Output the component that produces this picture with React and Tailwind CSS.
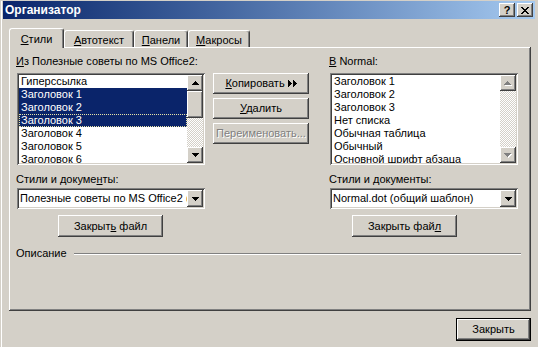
import React from "react";

// classic 3D edges
const RAISED =
  "shadow-[inset_-1px_-1px_0_#404040,inset_1px_1px_0_#ffffff,inset_-2px_-2px_0_#808080,inset_2px_2px_0_#d4d0c8]";
const SUNKEN =
  "shadow-[inset_1px_1px_0_#808080,inset_-1px_-1px_0_#ffffff,inset_2px_2px_0_#404040,inset_-2px_-2px_0_#d4d0c8]";

const ARROWS = {
  down: { w: 7, h: 4, d: "M0 0h7v1h-1v1h-1v1h-1v1h-1v-1h-1v-1h-1v-1h-1z" },
  up: { w: 7, h: 4, d: "M3 0h1v1h1v1h1v1h1v1h-7v-1h1v-1h1v-1h1z" },
  right: { w: 4, h: 7, d: "M0 0h1v1h1v1h1v1h1v1h-1v1h-1v1h-1v1h-1z" },
};

function Arrow({ dir, disabled }) {
  const a = ARROWS[dir];
  if (disabled) {
    return (
      <svg width={a.w + 1} height={a.h + 1} shapeRendering="crispEdges">
        <path d={a.d} fill="#ffffff" transform="translate(1 1)" />
        <path d={a.d} fill="#808080" />
      </svg>
    );
  }
  return (
    <svg width={a.w} height={a.h} shapeRendering="crispEdges">
      <path d={a.d} fill="#000000" />
    </svg>
  );
}

const CLOSE_GLYPH = [
  "XX....XX",
  ".XX..XX.",
  "..XXXX..",
  "...XX...",
  "..XXXX..",
  ".XX..XX.",
  "XX....XX",
];

function CloseGlyph() {
  return (
    <svg width="8" height="7" shapeRendering="crispEdges">
      {CLOSE_GLYPH.flatMap((row, y) =>
        row.split("").map((c, x) =>
          c === "X" ? <rect key={`${x}-${y}`} x={x} y={y} width="1" height="1" fill="#000" /> : null
        )
      )}
    </svg>
  );
}

function ScrollButton({ dir, disabled }) {
  return (
    <div className={`w-[16px] h-[16px] shrink-0 bg-[#d4d0c8] flex items-center justify-center ${RAISED}`}>
      <Arrow dir={dir} disabled={disabled} />
    </div>
  );
}

function Scrollbar({ thumb, disabled }) {
  return (
    <div className="w-[16px] flex flex-col">
      <ScrollButton dir="up" disabled={disabled} />
      {thumb && <div className={`h-[27px] shrink-0 bg-[#d4d0c8] ${RAISED}`} />}
      <div className="flex-1 bg-[repeating-conic-gradient(#ffffff_0_25%,#d4d0c8_0_50%)] bg-[length:2px_2px]" />
      <ScrollButton dir="down" disabled={disabled} />
    </div>
  );
}

function ListBox({ items, selected = [], focus, thumb, disabled }) {
  return (
    <div className={`w-[188px] h-[92px] bg-white p-[2px] flex ${SUNKEN}`}>
      <div className="flex-1 overflow-hidden">
        {items.map((item, i) => (
          <div
            key={item}
            className={`h-[13px] leading-[11px] pt-px pl-[2px] whitespace-nowrap ${
              selected.includes(i) ? "bg-[#0a246a] text-white" : ""
            } ${focus === i ? "outline-1 outline-dotted outline-[#e8e4a8] -outline-offset-1" : ""}`}
          >
            {item}
          </div>
        ))}
      </div>
      <Scrollbar thumb={thumb} disabled={disabled} />
    </div>
  );
}

function Combo({ text }) {
  return (
    <div className={`h-[21px] bg-white p-[2px] flex ${SUNKEN}`}>
      <div className="flex-1 overflow-hidden whitespace-nowrap pl-px leading-[17px]">{text}</div>
      <div className={`w-[16px] h-[17px] bg-[#d4d0c8] flex items-center justify-center ${RAISED}`}>
        <Arrow dir="down" />
      </div>
    </div>
  );
}

function Button({ children, className = "", disabled }) {
  return (
    <div
      className={`bg-[#d4d0c8] flex items-center justify-center whitespace-nowrap ${RAISED} ${
        disabled ? "text-[#808080] [text-shadow:1px_1px_0_#ffffff]" : ""
      } ${className}`}
    >
      {children}
    </div>
  );
}

function Tab({ children, active, width }) {
  return (
    <div
      className={`${width} border-l border-t border-white border-r border-r-[#404040] rounded-t-[3px] shadow-[inset_-1px_0_0_#808080] bg-[#d4d0c8] text-center ${
        active ? "h-[20px] -mb-px pt-[4px] relative z-10" : "h-[17px] pt-[3px]"
      }`}
    >
      {children}
    </div>
  );
}

const leftItems = [
  "Гиперссылка",
  "Заголовок 1",
  "Заголовок 2",
  "Заголовок 3",
  "Заголовок 4",
  "Заголовок 5",
  "Заголовок 6",
];
const rightItems = [
  "Заголовок 1",
  "Заголовок 2",
  "Заголовок 3",
  "Нет списка",
  "Обычная таблица",
  "Обычный",
  "Основной шрифт абзаца",
];

export default function App() {
  return (
    <div className="w-[538px] h-[347px] overflow-hidden bg-[#d4d0c8] pl-px pt-px font-['Liberation_Sans',Arial,sans-serif] text-[11px] leading-[13px] text-black select-none">
      <div className="h-full border-l border-white">
        {/* title bar */}
        <div className="ml-px w-[532px] h-[18px] bg-linear-to-r from-[#0a246a] to-[#a6caf0] flex items-center pl-[2px] pr-[2px]">
          <span className="font-bold text-[12px] text-white flex-1">Организатор</span>
          <div className={`w-[16px] h-[14px] bg-[#d4d0c8] flex items-center justify-center font-bold leading-[12px] ${RAISED}`}>
            ?
          </div>
          <div className={`ml-[2px] w-[16px] h-[14px] bg-[#d4d0c8] flex items-center justify-center ${RAISED}`}>
            <CloseGlyph />
          </div>
        </div>

        {/* tabs */}
        <div className="mt-[9px] ml-[7px] h-[19px] flex items-end">
          <Tab active width="w-[55px]">
            <u>С</u>тили
          </Tab>
          <Tab width="w-[70px]">
            <u>А</u>втотекст
          </Tab>
          <Tab width="w-[54px]">
            <u>П</u>анели
          </Tab>
          <Tab width="w-[62px]">
            <u>М</u>акросы
          </Tab>
        </div>

        {/* tab page */}
        <div className={`ml-[7px] w-[522px] h-[264px] pt-[8px] pl-[8px] flex flex-col ${RAISED}`}>
          <div className="flex">
            <div className="w-[188px] flex flex-col">
              <div className="-ml-px whitespace-nowrap">
                <u>И</u>з Полезные советы по MS Office2:
              </div>
              <div className="mt-[5px]">
                <ListBox items={leftItems} selected={[1, 2, 3]} focus={3} thumb />
              </div>
              <div className="mt-[8px] -ml-px">
                Стили и докуме<u>н</u>ты:
              </div>
              <div className="mt-[2px]">
                <Combo text="Полезные советы по MS Office2 (" />
              </div>
              <Button className="mt-[6px] ml-[41px] w-[105px] h-[22px]">
                <span>
                  Закрыт<u>ь</u> файл
                </span>
              </Button>
            </div>

            <div className="ml-[8px] w-[96px] pt-[18px] flex flex-col gap-[4px]">
              <Button className="h-[21px] gap-[3px]">
                <span>
                  <u>К</u>опировать
                </span>
                <span className="flex gap-[1px]">
                  <Arrow dir="right" />
                  <Arrow dir="right" />
                </span>
              </Button>
              <Button className="h-[21px]">
                <span>
                  <u>У</u>далить
                </span>
              </Button>
              <Button className="h-[21px]" disabled>
                <span>Переименовать...</span>
              </Button>
            </div>

            <div className="ml-[21px] w-[188px] flex flex-col">
              <div className="-ml-px">
                <u>В</u> Normal:
              </div>
              <div className="mt-[5px]">
                <ListBox items={rightItems} disabled />
              </div>
              <div className="mt-[8px] -ml-px">
                Стили и <u>д</u>окументы:
              </div>
              <div className="mt-[2px]">
                <Combo text="Normal.dot (общий шаблон)" />
              </div>
              <Button className="mt-[6px] ml-[22px] w-[105px] h-[22px]">
                <span>
                  Закрыть фай<u>л</u>
                </span>
              </Button>
            </div>
          </div>

          <div className="mt-[10px] pr-[10px] flex items-center">
            <span className="-ml-px">Описание</span>
            <div className="ml-[7px] flex-1 h-[2px] border-t border-t-[#808080] border-b border-b-white" />
          </div>
        </div>

        {/* footer */}
        <div className="mt-[7px] ml-[454px] w-[75px] h-[23px] border border-black">
          <Button className="w-full h-full">
            <span>Закрыть</span>
          </Button>
        </div>
      </div>
    </div>
  );
}
